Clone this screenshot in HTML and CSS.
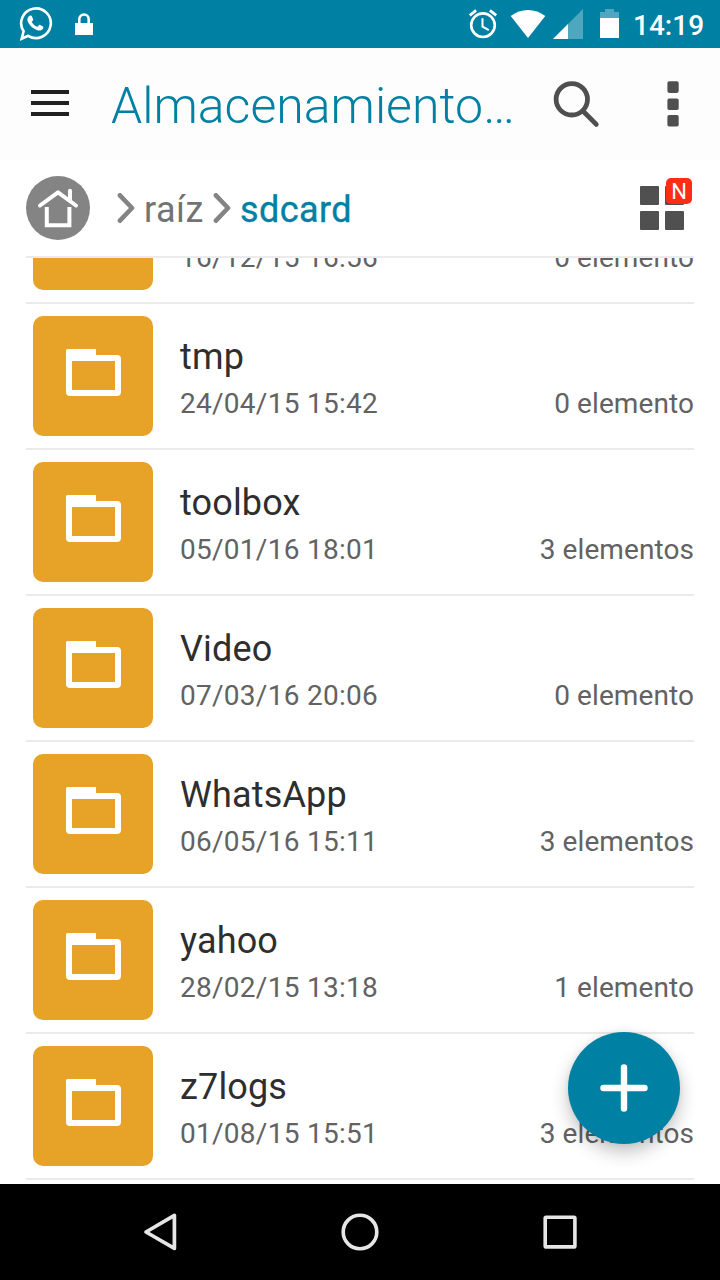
FILE: index.html
```html
<!DOCTYPE html>
<html lang="es">
<head>
<meta charset="utf-8">
<title>Almacenamiento</title>
<link rel="stylesheet" href="styles.css">
</head>
<body>
<div class="screen">
  <header class="status">
    <svg class="ic-whatsapp" width="36" height="38" viewBox="19 5 36 38"><path d="M22.7 38.8 24.6 31.3A14.8 14.8 0 1 1 29.2 35.8Z" fill="none" stroke="#fff" stroke-width="2.6" stroke-linejoin="miter"/><path d="M30.6 15.8c1-.5 1.9-.4 2.3.5l1.3 3.1c.3.8-1.7 2-1.4 2.7 1.2 2.2 3.1 3.9 5.4 4.7.8.3 1.8-2.3 2.6-2l3.2 1.6c.6.3.3 1.700-.1 2.400-1 1.600-3 2-4.700 1.600-5-1.200-8.800-4.800-10.600-9.300-.7-2.100.3-4.300 2-5.300z" fill="#fff"/></svg>
    <svg class="ic-lock" width="20" height="24" viewBox="74 12 20 24"><path d="M75 23h18v12H75z" fill="#fff"/><path d="M79.300 24v-4.800a4.700 4.700 0 0 1 9.400 0V24" fill="none" stroke="#fff" stroke-width="2.600"/></svg>
    <span class="spacer"></span>
    <svg class="ic-alarm" width="30" height="32" viewBox="468 8 30 32"><g fill="none" stroke="#fff"><circle cx="483" cy="25.200" r="11.800" stroke-width="2.600"/><path d="M469.800 15.300l6.300-4.900M496.200 15.300l-6.300-4.900" stroke-width="2.800"/><path d="M482.500 18.300v8.300l6.300 3.600" stroke-width="2"/></g></svg>
    <svg class="ic-wifi" width="36" height="30" viewBox="510 9 36 30"><path d="M510.700 16.100C521 8 535 8 545.300 16.100L528 38z" fill="#fff"/></svg>
    <svg class="ic-signal" width="30" height="30" viewBox="553 9 30 30"><path d="M583 9v30h-30z" fill="#4fa6bf"/><path d="M568 24v15h-15z" fill="#fff"/></svg>
    <svg class="ic-battery" width="20" height="30" viewBox="600 9 20 30"><path d="M605 9h9v3h5v6h-19v-6h5z" fill="#4fa6bf"/><path d="M600 18h19v20h-19z" fill="#fff"/></svg>
    <span class="clock">14:19</span>
  </header>
  <div class="toolbar">
    <svg class="ic-menu" width="38" height="26" viewBox="0 0 38 26"><path d="M0 0h38v4H0zM0 11h38v4H0zM0 22h38v4H0z" fill="#212121"/></svg>
    <h1 class="title">Almacenamiento…</h1>
    <svg class="ic-search" width="48" height="48" viewBox="552 80 48 48"><g fill="none" stroke="#4f4f4f"><circle cx="571.800" cy="99.300" r="15.700" stroke-width="4.800"/><path d="M583.200 111.200L596.300 124.400" stroke-width="4.800" stroke-linecap="round"/></g></svg>
    <svg class="ic-more" width="12" height="46" viewBox="666.600 81 12 46"><g fill="#4f4f4f"><rect x="667" y="81.300" width="11.300" height="11.600" rx="1.800"/><rect x="667" y="98.600" width="11.300" height="11.400" rx="1.800"/><rect x="667" y="115" width="11.300" height="11.600" rx="1.800"/></g></svg>
  </div>
  <nav class="crumbs">
    <svg class="ic-home" width="64" height="64" viewBox="26 176 64 64"><circle cx="58" cy="208" r="32" fill="#848484"/><g fill="none" stroke="#fff" stroke-width="4" stroke-linecap="round" stroke-linejoin="round"><path d="M40 205.500L58 192.300 76 205.500M70 190.800v10"/><path d="M46.800 207v18.200h22.600V207" stroke-linecap="butt" stroke-linejoin="miter"/></g></svg>
    <svg class="chev" width="18" height="31" viewBox="117 192 18 31"><path d="M119.900 194.300L132 207 119.900 219.700" fill="none" stroke="#848484" stroke-width="4.600" stroke-linecap="round" stroke-linejoin="round"/></svg>
    <span class="crumb root">raíz</span>
    <svg class="chev second" width="18" height="31" viewBox="117 192 18 31"><path d="M119.900 194.300L132 207 119.900 219.700" fill="none" stroke="#848484" stroke-width="4.600" stroke-linecap="round" stroke-linejoin="round"/></svg>
    <span class="crumb current">sdcard</span>
    <span class="spacer"></span>
    <div class="grid-btn"><i></i><i></i><i></i><i></i><b class="badge">N</b></div>
  </nav>
  <main class="list" id="list">
    <div class="row"><div class="tile"><svg class="folder" width="55" height="47" viewBox="0 0 55 47"><path fill-rule="evenodd" d="M1.500 0H30V6H51a4 4 0 0 1 4 4V43a4 4 0 0 1-4 4H4a4 4 0 0 1-4-4V1.500A1.500 1.500 0 0 1 1.500 0zM6 12V41H49V12z" fill="#fff"/></svg></div><div class="info"><div class="name"></div><div class="meta"><span class="date">16/12/15 16:56</span><span class="count">0 elemento</span></div></div></div>
    <div class="row"><div class="tile"><svg class="folder" width="55" height="47" viewBox="0 0 55 47"><path fill-rule="evenodd" d="M1.500 0H30V6H51a4 4 0 0 1 4 4V43a4 4 0 0 1-4 4H4a4 4 0 0 1-4-4V1.500A1.500 1.500 0 0 1 1.500 0zM6 12V41H49V12z" fill="#fff"/></svg></div><div class="info"><div class="name">tmp</div><div class="meta"><span class="date">24/04/15 15:42</span><span class="count">0 elemento</span></div></div></div>
    <div class="row"><div class="tile"><svg class="folder" width="55" height="47" viewBox="0 0 55 47"><path fill-rule="evenodd" d="M1.500 0H30V6H51a4 4 0 0 1 4 4V43a4 4 0 0 1-4 4H4a4 4 0 0 1-4-4V1.500A1.500 1.500 0 0 1 1.500 0zM6 12V41H49V12z" fill="#fff"/></svg></div><div class="info"><div class="name">toolbox</div><div class="meta"><span class="date">05/01/16 18:01</span><span class="count">3 elementos</span></div></div></div>
    <div class="row"><div class="tile"><svg class="folder" width="55" height="47" viewBox="0 0 55 47"><path fill-rule="evenodd" d="M1.500 0H30V6H51a4 4 0 0 1 4 4V43a4 4 0 0 1-4 4H4a4 4 0 0 1-4-4V1.500A1.500 1.500 0 0 1 1.500 0zM6 12V41H49V12z" fill="#fff"/></svg></div><div class="info"><div class="name">Video</div><div class="meta"><span class="date">07/03/16 20:06</span><span class="count">0 elemento</span></div></div></div>
    <div class="row"><div class="tile"><svg class="folder" width="55" height="47" viewBox="0 0 55 47"><path fill-rule="evenodd" d="M1.500 0H30V6H51a4 4 0 0 1 4 4V43a4 4 0 0 1-4 4H4a4 4 0 0 1-4-4V1.500A1.500 1.500 0 0 1 1.500 0zM6 12V41H49V12z" fill="#fff"/></svg></div><div class="info"><div class="name">WhatsApp</div><div class="meta"><span class="date">06/05/16 15:11</span><span class="count">3 elementos</span></div></div></div>
    <div class="row"><div class="tile"><svg class="folder" width="55" height="47" viewBox="0 0 55 47"><path fill-rule="evenodd" d="M1.500 0H30V6H51a4 4 0 0 1 4 4V43a4 4 0 0 1-4 4H4a4 4 0 0 1-4-4V1.500A1.500 1.500 0 0 1 1.500 0zM6 12V41H49V12z" fill="#fff"/></svg></div><div class="info"><div class="name">yahoo</div><div class="meta"><span class="date">28/02/15 13:18</span><span class="count">1 elemento</span></div></div></div>
    <div class="row"><div class="tile"><svg class="folder" width="55" height="47" viewBox="0 0 55 47"><path fill-rule="evenodd" d="M1.500 0H30V6H51a4 4 0 0 1 4 4V43a4 4 0 0 1-4 4H4a4 4 0 0 1-4-4V1.500A1.500 1.500 0 0 1 1.500 0zM6 12V41H49V12z" fill="#fff"/></svg></div><div class="info"><div class="name">z7logs</div><div class="meta"><span class="date">01/08/15 15:51</span><span class="count">3 elementos</span></div></div></div>
  </main>
  <div class="fab"><svg width="48" height="48" viewBox="0 0 48 48"><path d="M24 3.500v41M3.500 24h41" stroke="#fff" stroke-width="6.400" stroke-linecap="round"/></svg></div>
  <footer class="navbar">
    <svg width="40" height="40" viewBox="140 1212 40 40"><path d="M174.400 1215.400v33L146 1232z" fill="none" stroke="#e6e6e6" stroke-width="3.700" stroke-linejoin="round"/></svg>
    <svg width="40" height="40" viewBox="340 1212 40 40"><circle cx="360" cy="1232" r="16.800" fill="none" stroke="#e6e6e6" stroke-width="3.600"/></svg>
    <svg width="40" height="40" viewBox="540 1212 40 40"><rect x="545.200" y="1217.200" width="29.700" height="29.700" rx="1" fill="none" stroke="#e6e6e6" stroke-width="3.600"/></svg>
  </footer>
</div>
</body>
</html>
```
FILE: styles.css
```css
* { box-sizing: border-box; }
body { margin: 0; font-family: Roboto, "Noto Sans", sans-serif; background: #fff; }
svg { display: block; flex: none; }
.screen { position: relative; width: 720px; height: 1280px; display: flex; flex-direction: column; overflow: hidden; background: #fff; }
.spacer { flex: 1; }

.status { height: 48px; flex: none; display: flex; align-items: center; padding: 0 16px 0 18px; background: #0080a2; }
.ic-lock { margin-left: 20px; }
.ic-wifi { margin-left: 12px; }
.ic-signal { margin-left: 7px; }
.ic-battery { margin-left: 17px; }
.clock { width: 71px; margin-left: 13px; padding-top: 3px; font-size: 28px; line-height: 32px; font-weight: 500; color: #fff; white-space: nowrap; }

.toolbar { height: 112px; flex: none; display: flex; align-items: center; padding: 0 41px 0 31px; background: #fdfdfd; }
.ic-menu { margin-top: -2px; }
.title { flex: 1; margin: 4px 0 0 42px; font-size: 50px; line-height: 60px; font-weight: 300; color: #0080a2; white-space: nowrap; }
.ic-more { margin-left: 67px; }
.ic-search { margin-right: 0; }

.crumbs { height: 98px; flex: none; display: flex; align-items: center; margin: 0 26px; padding-right: 10px; border-bottom: 2px solid #ebebeb; }
.chev { margin-left: 27px; }
.crumb { font-size: 36px; line-height: 44px; padding-top: 3px; white-space: nowrap; }
.root { width: 62px; margin-left: 9px; letter-spacing: .5px; color: #737373; }
.chev.second { margin-left: 7px; }
.current { margin-left: 9px; letter-spacing: .4px; color: #0080a2; -webkit-text-stroke: .35px #0080a2; }
.grid-btn { position: relative; display: grid; grid-template-columns: 19px 19px; gap: 6px; }
.grid-btn i { height: 19px; border-radius: 1px; background: #505050; }
.badge { position: absolute; top: -8px; left: 26px; width: 26px; height: 26px; border-radius: 5px; background: #ff2d16; color: #fff; font-size: 22px; line-height: 27px; font-weight: 400; text-align: center; }

.list { flex: 1; min-height: 0; overflow: hidden; margin: 0 26px; display: flex; flex-direction: column; justify-content: flex-end; padding-bottom: 4px; }
.row { height: 146px; flex: none; display: flex; padding: 12px 0 0 7px; border-bottom: 2px solid #ebebeb; }
.tile { width: 120px; height: 120px; flex: none; padding: 33px; border-radius: 10px; background: #e7a228; }
.info { flex: 1; margin-left: 27px; padding-top: 18px; }
.name { height: 47px; font-size: 36px; line-height: 46px; letter-spacing: .15px; color: #2e2e2e; }
.meta { display: flex; justify-content: space-between; font-size: 28px; line-height: 46px; color: #626262; white-space: nowrap; }
.date { letter-spacing: .27px; }
.count { letter-spacing: .08px; }

.fab { position: absolute; left: 568px; top: 1032px; width: 112px; height: 112px; border-radius: 50%; display: flex; align-items: center; justify-content: center; background: #0080a2; box-shadow: 0 8px 18px rgba(0,0,0,.24), 0 0 5px rgba(0,0,0,.07); }
.navbar { height: 96px; flex: none; display: flex; justify-content: space-between; align-items: center; padding: 0 140px; background: #000; position: relative; }
```
